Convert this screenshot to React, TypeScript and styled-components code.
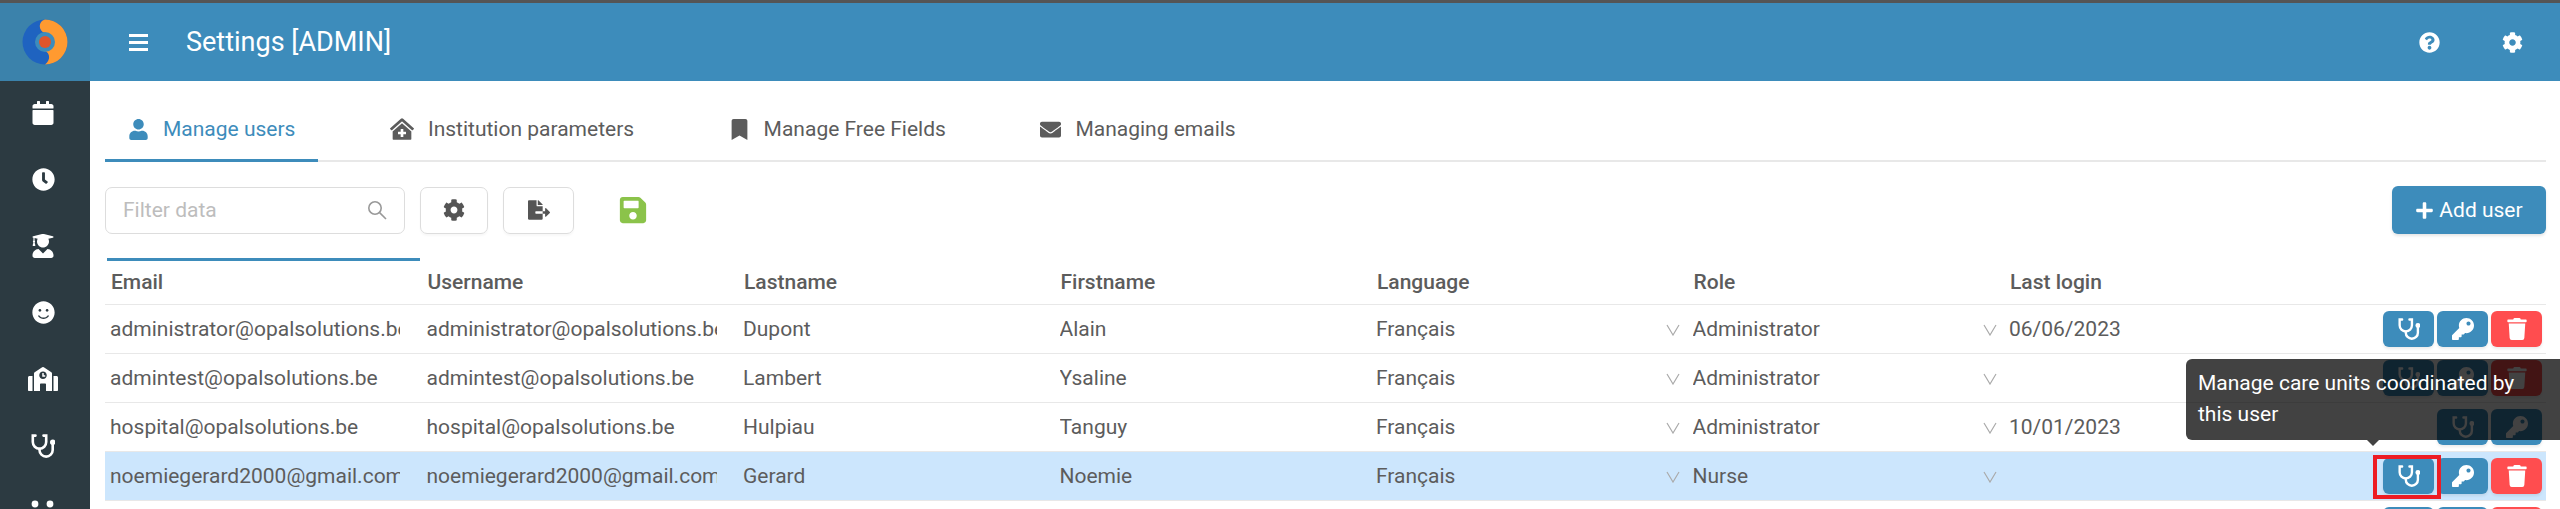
import styled, { createGlobalStyle } from "styled-components";
import { ReactNode } from "react";
import {
    FaBookmark,
    FaCalendar,
    FaClinicMedical,
    FaClock,
    FaCog,
    FaEnvelope,
    FaFileExport,
    FaKey,
    FaPlus,
    FaQuestionCircle,
    FaSave,
    FaSchool,
    FaSmile,
    FaTrash,
    FaUser,
    FaUserGraduate,
} from "react-icons/fa";

const GlobalStyle = createGlobalStyle`
    html, body {
        margin: 0;
        padding: 0;
        height: 509px;
        overflow: hidden;
        background: #fff;
        font-family: Roboto, "Liberation Sans", sans-serif;
        color: #555;
    }
    * {
        box-sizing: border-box;
    }
`

const Page = styled.div`
    position: relative;
    display: grid;
    grid-template-columns: 90px 1fr;
    grid-template-rows: 78px 1fr;
    height: 509px;
    overflow: hidden;
    border-top: 3px solid #555;
`

const LogoBox = styled.div`
    display: flex;
    align-items: center;
    justify-content: center;
    background: #3b82ab;
`

const Header = styled.header`
    display: flex;
    align-items: center;
    padding: 0 37px 0 39px;
    background: #3d8cbb;
    color: #fff;
`

const Burger = styled.div`
    display: flex;
    flex-direction: column;
    justify-content: space-between;
    width: 19px;
    height: 17px;
    margin-right: 38px;

    & span {
        height: 3px;
        background: #fff;
    }
`

const Title = styled.h1`
    flex: 1;
    margin: 0;
    font-size: 27px;
    font-weight: 400;
`

const HeaderIcons = styled.div`
    display: flex;
    align-items: center;
    gap: 62px;
    font-size: 21px;

    & svg {
        display: block;
    }
`

const Sidebar = styled.nav`
    display: flex;
    flex-direction: column;
    align-items: center;
    gap: 42.5px;
    padding-top: 20px;
    padding-right: 4px;
    background: #2c3a41;
    color: #fff;
    overflow: hidden;
`

const SideItem = styled.div`
    display: flex;
    align-items: center;
    justify-content: center;
    flex: none;
    height: 24px;
    font-size: 24px;
`

const Main = styled.main`
    padding: 0 14px 0 15px;
    overflow: hidden;
`

const Tabs = styled.div`
    display: flex;
    gap: 48.5px;
    height: 81px;
    border-bottom: 2px solid #e8e8e8;
`

const Tab = styled.div<{ $active?: boolean }>`
    display: flex;
    align-items: center;
    gap: 14px;
    height: 81px;
    padding: 18px 23px 0 23px;
    font-size: 21px;
    font-weight: 400;
    color: ${(p) => (p.$active ? "#3d8cbb" : "#5c5c5c")};
    border-bottom: 3px solid ${(p) => (p.$active ? "#3d8cbb" : "transparent")};

    & svg {
        flex: none;
    }
`

const Toolbar = styled.div`
    display: flex;
    align-items: center;
    height: 48px;
    margin-top: 24px;
`

const Filter = styled.div`
    display: flex;
    align-items: center;
    justify-content: space-between;
    width: 300px;
    height: 47px;
    padding: 0 17px 0 17px;
    border: 1.5px solid #ddd;
    border-radius: 7px;
    font-size: 21px;
    color: #bdbdbd;
`

const ToolButton = styled.div<{ $width: number }>`
    display: flex;
    align-items: center;
    justify-content: center;
    width: ${(p) => p.$width}px;
    height: 47px;
    margin-left: 15px;
    border: 1.5px solid #ddd;
    border-radius: 7px;
    box-shadow: 0 2px 2px rgba(0, 0, 0, 0.03);
    font-size: 22px;
    color: #555;
`

const SaveIcon = styled.div`
    display: flex;
    margin-left: 44px;
    font-size: 30px;
    color: #8bc34a;
`

const AddButton = styled.div`
    display: flex;
    align-items: center;
    justify-content: center;
    gap: 5px;
    width: 154px;
    height: 48px;
    margin-left: auto;
    border-radius: 6px;
    background: #3d8cbb;
    box-shadow: 0 2px 3px rgba(0, 0, 0, 0.1);
    color: #fff;
    font-size: 21px;
`

const Table = styled.div`
    margin-top: 24px;
`

const gridColumns = "repeat(7, 316.5px) 1fr"

const HeadRow = styled.div`
    display: grid;
    grid-template-columns: ${gridColumns};
    height: 46px;
`

const HeadCell = styled.div<{ $sorted?: boolean }>`
    display: flex;
    align-items: center;
    padding: 0 0 2px 4px;
    margin: 0 2px 0 2px;
    border-top: 3px solid ${(p) => (p.$sorted ? "#3d8cbb" : "transparent")};
    font-size: 21px;
    font-weight: 500;
    color: #5c5c5c;
`

const Row = styled.div<{ $selected?: boolean }>`
    display: grid;
    grid-template-columns: ${gridColumns};
    height: 49px;
    border-top: 1.5px solid #e8e8e8;
    background: ${(p) => (p.$selected ? "#cce6fd" : "#fff")};
`

const Cell = styled.div`
    display: flex;
    align-items: center;
    min-width: 0;
    padding: 0 6px 0 5px;
    font-size: 21px;
    font-weight: 400;
    color: #5c5c5c;
`

const CellText = styled.span`
    flex: 1;
    max-width: 290px;
    overflow: hidden;
    white-space: nowrap;
`

const Chevron = styled.svg`
    flex: none;
    width: 14px;
    height: 14px;
    fill: none;
    stroke: #aaa;
    stroke-width: 1.2;
`

const Actions = styled.div`
    display: flex;
    align-items: flex-start;
    justify-content: flex-end;
    gap: 3px;
    padding: 5.5px 4px 0 0;
`

const ActionButton = styled.div<{ $danger?: boolean }>`
    display: flex;
    align-items: center;
    justify-content: center;
    width: 51px;
    height: 36px;
    border-radius: 6px;
    background: ${(p) => (p.$danger ? "#ff4d4f" : "#3d8cbb")};
    box-shadow: 0 2px 3px rgba(0, 0, 0, 0.08);
    color: #fff;
    font-size: 22px;
`

const Tooltip = styled.div`
    position: absolute;
    top: 356px;
    left: 2186px;
    width: 380px;
    height: 81px;
    padding: 9px 30px 9px 12px;
    border-radius: 6px;
    background: rgba(0, 0, 0, 0.74);
    color: #fff;
    font-size: 21px;
    line-height: 31px;

    &::after {
        content: "";
        position: absolute;
        top: 81px;
        left: 181px;
        border: 6px solid transparent;
        border-bottom: none;
        border-top-color: rgba(0, 0, 0, 0.74);
    }
`

const Highlight = styled.div`
    position: absolute;
    top: 452px;
    left: 2373px;
    width: 68px;
    height: 44px;
    border: 4px solid #ed1c24;
`

const SearchIcon = () => (
    <svg width="20" height="20" viewBox="0 0 20 20" fill="none" stroke="#999" strokeWidth="1.6">
        <circle cx="8" cy="8" r="6.2" />
        <path d="M12.6 12.6 L19 19" />
    </svg>
)

const ChevronDown = () => (
    <Chevron viewBox="0 0 14 14">
        <path d="M1 3 L7 13 L13 3" />
    </Chevron>
)

const Logo = () => (
    <svg width="46" height="46" viewBox="0 0 46 46">
        <circle cx="23" cy="23" r="22.5" fill="#1f63c0" />
        <path d="M23 .5 A22.5 22.5 0 0 1 23 45.5 C29 41 28 34 23 32 A9 9 0 0 0 23 14 C16 12 16 2 23 .5 Z" fill="#ff9a30" />
        <circle cx="23" cy="23" r="10" fill="#3d8cbb" />
        <circle cx="23" cy="23" r="6" fill="#e0552a" />
    </svg>
)

const UsersIcon = () => (
    <svg width="30" height="24" viewBox="0 0 30 24" fill="#fff">
        <circle cx="7" cy="4" r="3.4" />
        <circle cx="22" cy="4" r="3.4" />
        <path d="M1 18 C1 11 4 9 7 9 C10 9 13 12 13 18 Z" />
        <path d="M16 18 C16 12 19 9 22 9 C25 9 29 11 29 18 Z" />
    </svg>
)

const StethoscopeIcon = ({ size }: { size: number }) => (
    <svg width={size} height={size} viewBox="0 0 24 24" fill="none" stroke="#fff" strokeWidth="2.6" strokeLinecap="round">
        <path d="M4.5 1.6H1.8V8a6.7 6.7 0 0 0 13.4 0V1.6H12.5" />
        <path d="M8.5 14.8V16a6.6 6.6 0 0 0 13.2 0V10" />
        <circle cx="21.7" cy="8.2" r="1.4" />
    </svg>
)

const sideIcons: ReactNode[] = [
    <FaCalendar key="calendar" />,
    <FaClock key="clock" size={23} />,
    <FaUserGraduate key="graduate" />,
    <FaSmile key="smile" size={23} />,
    <FaSchool key="school" size={30} />,
    <StethoscopeIcon key="stethoscope" size={24} />,
    <UsersIcon key="users" />,
]

const tabs = [
    { label: "Manage users", icon: <FaUser />, active: true },
    { label: "Institution parameters", icon: <FaClinicMedical size={24} /> },
    { label: "Manage Free Fields", icon: <FaBookmark /> },
    { label: "Managing emails", icon: <FaEnvelope /> },
]

const columns = ["Email", "Username", "Lastname", "Firstname", "Language", "Role", "Last login"]

const users = [
    { email: "administrator@opalsolutions.be", last: "Dupont", first: "Alain", role: "Administrator", login: "06/06/2023" },
    { email: "admintest@opalsolutions.be", last: "Lambert", first: "Ysaline", role: "Administrator", login: "" },
    { email: "hospital@opalsolutions.be", last: "Hulpiau", first: "Tanguy", role: "Administrator", login: "10/01/2023", noDelete: true },
    { email: "noemiegerard2000@gmail.com", last: "Gerard", first: "Noemie", role: "Nurse", login: "", selected: true },
    { email: "", last: "", first: "", role: "", login: "", blank: true },
]

const UserRow = ({ user }: { user: (typeof users)[number] }) => (
    <Row $selected={user.selected}>
        <Cell><CellText>{user.email}</CellText></Cell>
        <Cell><CellText>{user.email}</CellText></Cell>
        <Cell><CellText>{user.last}</CellText></Cell>
        <Cell><CellText>{user.first}</CellText></Cell>
        <Cell>
            <CellText>{user.blank ? "" : "Français"}</CellText>
            <ChevronDown />
        </Cell>
        <Cell>
            <CellText>{user.role}</CellText>
            <ChevronDown />
        </Cell>
        <Cell><CellText>{user.login}</CellText></Cell>
        <Actions>
            <ActionButton><StethoscopeIcon size={22} /></ActionButton>
            <ActionButton><FaKey /></ActionButton>
            {!user.noDelete && <ActionButton $danger><FaTrash /></ActionButton>}
        </Actions>
    </Row>
)

const App = () => {
    return (
        <>
            <GlobalStyle />
            <Page>
                <LogoBox><Logo /></LogoBox>
                <Header>
                    <Burger><span /><span /><span /></Burger>
                    <Title>Settings [ADMIN]</Title>
                    <HeaderIcons>
                        <FaQuestionCircle />
                        <FaCog />
                    </HeaderIcons>
                </Header>
                <Sidebar>
                    {sideIcons.map((icon, i) => (
                        <SideItem key={i}>{icon}</SideItem>
                    ))}
                </Sidebar>
                <Main>
                    <Tabs>
                        {tabs.map((tab) => (
                            <Tab key={tab.label} $active={tab.active}>
                                {tab.icon}
                                {tab.label}
                            </Tab>
                        ))}
                    </Tabs>
                    <Toolbar>
                        <Filter>
                            Filter data
                            <SearchIcon />
                        </Filter>
                        <ToolButton $width={68}><FaCog /></ToolButton>
                        <ToolButton $width={71}><FaFileExport /></ToolButton>
                        <SaveIcon><FaSave /></SaveIcon>
                        <AddButton><FaPlus size={19} />Add user</AddButton>
                    </Toolbar>
                    <Table>
                        <HeadRow>
                            {columns.map((column, i) => (
                                <HeadCell key={column} $sorted={i === 0}>{column}</HeadCell>
                            ))}
                        </HeadRow>
                        {users.map((user, i) => (
                            <UserRow key={i} user={user} />
                        ))}
                    </Table>
                </Main>
                <Tooltip>Manage care units coordinated by this user</Tooltip>
                <Highlight />
            </Page>
        </>
    )
}

export default App;
